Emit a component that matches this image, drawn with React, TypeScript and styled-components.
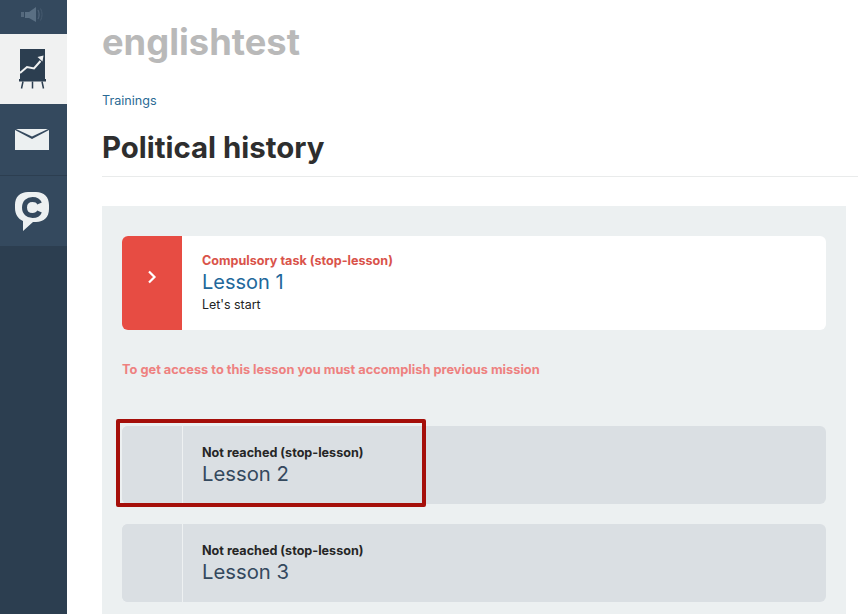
import * as React from "react"
import styled, { createGlobalStyle } from "styled-components"

const GlobalStyle = createGlobalStyle`
  html, body {
    margin: 0;
    padding: 0;
    height: 100%;
    background: #fff;
    overflow: hidden;
  }
  body {
    font-family: Inter, "Liberation Sans", sans-serif;
  }
  * {
    box-sizing: border-box;
  }
`

const Page = styled.div`
  display: flex;
  width: 858px;
  height: 614px;
  overflow: hidden;
`

const Sidebar = styled.nav`
  width: 67px;
  flex: none;
  background: #2c3e50;
  display: flex;
  flex-direction: column;
`

const NavItem = styled.div<{ $h: number; $active?: boolean; $line?: boolean }>`
  height: ${(p) => p.$h}px;
  padding-right: 3px;
  background: ${(p) => (p.$active ? "#f0f1f1" : "#34495e")};
  border-bottom: ${(p) => (p.$line ? "1px solid #2c3e50" : "none")};
  display: flex;
  align-items: center;
  justify-content: center;
`

/* the speaker is cut off by the scrolled sidebar, it sits high in its item */
const SpeakerItem = styled(NavItem)`
  padding-bottom: 6px;
`

const Main = styled.main`
  flex: 1;
  min-width: 0;
  padding: 20px 12px 0 35px;
`

const SiteName = styled.div`
  font-size: 36.3px;
  line-height: 44px;
  font-weight: 700;
  color: #b9b9b9;
`

const Crumb = styled.a`
  display: block;
  margin-top: 28px;
  font-size: 12.6px;
  line-height: 18px;
  color: #2a6a94;
`

const Title = styled.h1`
  margin: 19px -12px 0 0;
  height: 48px;
  padding-bottom: 10px;
  font-size: 29.4px;
  line-height: 37px;
  font-weight: 700;
  color: #2e2e2e;
  border-bottom: 1px solid #e9ebeb;
`

const Panel = styled.section`
  margin-top: 29px;
  height: 408px;
  background: #ecf0f1;
  padding: 30px 20px 0;
`

const Card = styled.div<{ $locked?: boolean; $h: number }>`
  position: relative;
  display: flex;
  height: ${(p) => p.$h}px;
  border-radius: 6px;
  background: ${(p) => (p.$locked ? "#dadfe3" : "#fff")};
`

const Side = styled.div<{ $locked?: boolean }>`
  width: ${(p) => (p.$locked ? 61 : 60)}px;
  flex: none;
  padding-bottom: ${(p) => (p.$locked ? 0 : 12)}px;
  border-radius: 6px 0 0 6px;
  background: ${(p) => (p.$locked ? "#dadfe3" : "#e74c43")};
  border-right: ${(p) => (p.$locked ? "1px solid #eef1f2" : "none")};
  display: flex;
  align-items: center;
  justify-content: center;
`

const Body = styled.div<{ $top: number; $locked?: boolean }>`
  padding: ${(p) => p.$top}px 0 0 ${(p) => (p.$locked ? 19 : 20)}px;
`

const Status = styled.div<{ $locked?: boolean }>`
  font-size: 12.6px;
  line-height: 16px;
  font-weight: 700;
  color: ${(p) => (p.$locked ? "#262626" : "#d9534a")};
`

const LessonName = styled.div<{ $locked?: boolean }>`
  font-size: ${(p) => (p.$locked ? 20.3 : 20)}px;
  line-height: 26px;
  color: ${(p) => (p.$locked ? "#34495e" : "#22689b")};
`

const Note = styled.div`
  font-size: 12.4px;
  line-height: 18px;
  margin-top: 1px;
  color: #222;
`

const Warning = styled.p`
  margin: 32px 0 48px;
  font-size: 12.8px;
  line-height: 16px;
  font-weight: 700;
  color: #ee8180;
`

const LockedList = styled.div`
  display: flex;
  flex-direction: column;
  gap: 20px;
`

const Highlight = styled.div`
  position: absolute;
  left: -6px;
  top: -7px;
  width: 310px;
  height: 88px;
  border: 4px solid #a50f0a;
  border-radius: 2px;
  pointer-events: none;
`

const Speaker = () => (
  <svg width="22" height="15" viewBox="0 0 22 15">
    <rect x="0" y="5" width="3" height="5" fill="#55697d" />
    <path d="M4 5h4l7-5v15l-7-4H4z" fill="#5a6f83" />
    <path d="M17 3c1.500 3 1.500 6 0 9" stroke="#4f6378" strokeWidth="1.200" fill="none" />
    <path d="M19.500 1.500c2 4 2 8 0 12" stroke="#465a6e" strokeWidth="1" fill="none" />
  </svg>
)

const Board = () => (
  <svg width="27" height="40" viewBox="0 0 27 40">
    <rect x="1" y="0" width="25" height="30" fill="#2c3e50" />
    <path d="M1 24l7-6 7 1.500 6.500-7.500" stroke="#f0f1f1" strokeWidth="2" fill="none" />
    <path d="M18.500 8l6-1.500-1 6z" fill="#f0f1f1" />
    <rect x="0" y="30" width="27" height="2.500" fill="#2c3e50" />
    <path d="M4 32.500l-1.500 7M13.500 32.500v7M23 32.500l1.500 7" stroke="#2c3e50" strokeWidth="1.500" fill="none" />
  </svg>
)

const Mail = () => (
  <svg width="34" height="21" viewBox="0 0 34 21">
    <path d="M0 1l17 9 17-9v20H0z" fill="#ecf0f1" />
    <path d="M1 0h32L17 7.500z" fill="#ecf0f1" />
  </svg>
)

const ChatLogo = () => (
  <svg width="34" height="39" viewBox="0 0 34 39">
    <path
      d="M13 0h8c8 0 13 5 13 13v4c0 8-5 13-13 13h-3l-10 9 0-10C3 27 0 22 0 16v-3C0 5 5 0 13 0z"
      fill="#ecf0f1"
    />
    <path
      d="M24.500 11.500C23.500 9 21 7.500 17.500 7.500 13 7.500 9.500 10.500 9.500 15.500S13 23.500 17.500 23.500c3.500 0 6-1.500 7-4"
      stroke="#34495e"
      strokeWidth="5"
      fill="none"
    />
  </svg>
)

const Chevron = () => (
  <svg width="10" height="14" viewBox="0 0 10 14">
    <path d="M2 1.500L7.500 7 2 12.500" stroke="#fff" strokeWidth="2.200" fill="none" />
  </svg>
)

export default function App() {
  return (
    <Page>
      <GlobalStyle />
      <Sidebar>
        <SpeakerItem $h={34}>
          <Speaker />
        </SpeakerItem>
        <NavItem $h={70} $active>
          <Board />
        </NavItem>
        <NavItem $h={72} $line>
          <Mail />
        </NavItem>
        <NavItem $h={70}>
          <ChatLogo />
        </NavItem>
      </Sidebar>
      <Main>
        <SiteName>englishtest</SiteName>
        <Crumb>Trainings</Crumb>
        <Title>Political history</Title>
        <Panel>
          <Card $h={94}>
            <Side>
              <Chevron />
            </Side>
            <Body $top={17}>
              <Status>Compulsory task (stop-lesson)</Status>
              <LessonName>Lesson 1</LessonName>
              <Note>Let's start</Note>
            </Body>
          </Card>
          <Warning>To get access to this lesson you must accomplish previous mission</Warning>
          <LockedList>
            <Card $h={78} $locked>
              <Side $locked />
              <Body $top={19} $locked>
                <Status $locked>Not reached (stop-lesson)</Status>
                <LessonName $locked>Lesson 2</LessonName>
              </Body>
              <Highlight />
            </Card>
            <Card $h={78} $locked>
              <Side $locked />
              <Body $top={19} $locked>
                <Status $locked>Not reached (stop-lesson)</Status>
                <LessonName $locked>Lesson 3</LessonName>
              </Body>
            </Card>
          </LockedList>
        </Panel>
      </Main>
    </Page>
  )
}
